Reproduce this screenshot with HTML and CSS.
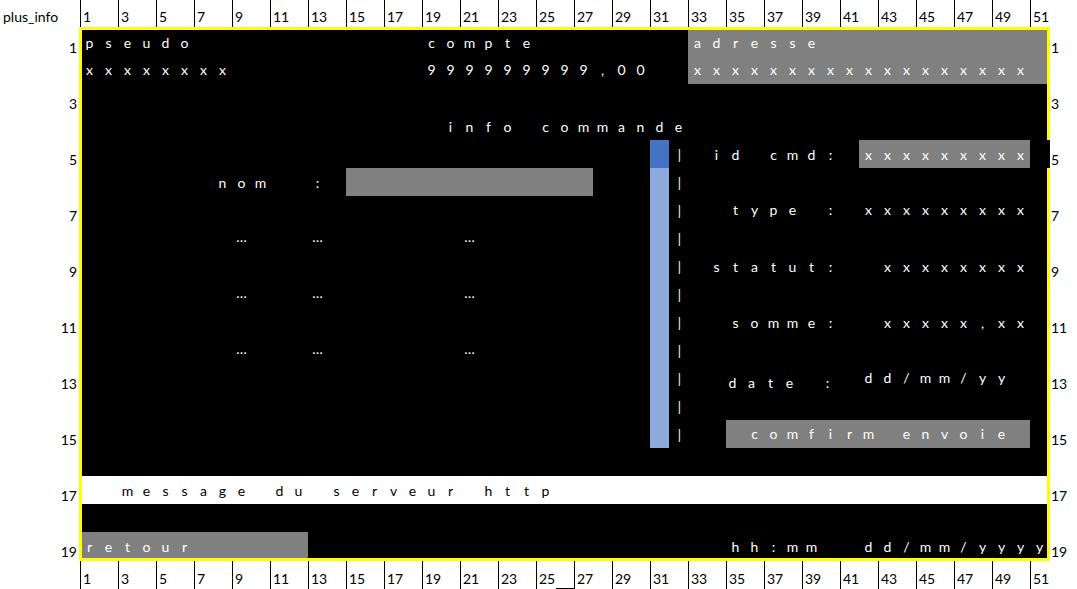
FILE: index.html
```html
<!DOCTYPE html>
<html lang="fr">
<head>
<meta charset="utf-8">
<title>plus_info</title>
<link rel="stylesheet" href="styles.css">
</head>
<body>
<div class="page">
  <div class="colhead top">
    <div class="corner">plus_info</div>
    <div class="ch">1</div><div class="ch">3</div><div class="ch">5</div><div class="ch">7</div><div class="ch">9</div><div class="ch">11</div><div class="ch">13</div><div class="ch">15</div><div class="ch">17</div><div class="ch">19</div><div class="ch">21</div><div class="ch">23</div><div class="ch">25</div><div class="ch">27</div><div class="ch">29</div><div class="ch">31</div><div class="ch">33</div><div class="ch">35</div><div class="ch">37</div><div class="ch">39</div><div class="ch">41</div><div class="ch">43</div><div class="ch">45</div><div class="ch">47</div><div class="ch">49</div><div class="ch">51</div>
  </div>

  <div class="middle">
    <div class="rowhead left">
      <div>1</div><div></div><div>3</div><div></div><div>5</div><div></div><div>7</div><div></div><div>9</div><div></div><div>11</div><div></div><div>13</div><div></div><div>15</div><div></div><div>17</div><div></div><div>19</div>
    </div>

    <div class="sheet">
      <div class="box grey b-adresse"></div>
      <div class="box grey b-nom"></div>
      <div class="box grey b-id"></div>
      <div class="box grey b-confirm"></div>
      <div class="box white b-msg"></div>
      <div class="box grey b-retour"></div>
      <div class="box blue-dark b-scroll1"></div>
      <div class="box blue-light b-scroll2"></div>

      <div class="run r-pseudo"><span>p</span><span>s</span><span>e</span><span>u</span><span>d</span><span>o</span></div>
      <div class="run r-x8"><span>x</span><span>x</span><span>x</span><span>x</span><span>x</span><span>x</span><span>x</span><span>x</span></div>
      <div class="run r-compte"><span>c</span><span>o</span><span>m</span><span>p</span><span>t</span><span>e</span></div>
      <div class="run r-solde"><span>9</span><span>9</span><span>9</span><span>9</span><span>9</span><span>9</span><span>9</span><span>9</span><span>9</span><span>,</span><span>0</span><span>0</span></div>
      <div class="run r-adresse"><span>a</span><span>d</span><span>r</span><span>e</span><span>s</span><span>s</span><span>e</span></div>
      <div class="run r-x18"><span>x</span><span>x</span><span>x</span><span>x</span><span>x</span><span>x</span><span>x</span><span>x</span><span>x</span><span>x</span><span>x</span><span>x</span><span>x</span><span>x</span><span>x</span><span>x</span><span>x</span><span>x</span></div>

      <div class="run r-info"><span>i</span><span>n</span><span>f</span><span>o</span><span></span><span>c</span><span>o</span><span>m</span><span>m</span><span>a</span><span>n</span><span>d</span><span>e</span></div>

      <div class="run r-nom"><span>n</span><span>o</span><span>m</span><span></span><span></span><span>:</span></div>
      <div class="run dots r-dots8"><span>…</span><span></span><span></span><span></span><span>…</span><span></span><span></span><span></span><span></span><span></span><span></span><span></span><span>…</span></div>
      <div class="run dots r-dots10"><span>…</span><span></span><span></span><span></span><span>…</span><span></span><span></span><span></span><span></span><span></span><span></span><span></span><span>…</span></div>
      <div class="run dots r-dots12"><span>…</span><span></span><span></span><span></span><span>…</span><span></span><span></span><span></span><span></span><span></span><span></span><span></span><span>…</span></div>

      <div class="pipes"><span>|</span><span>|</span><span>|</span><span>|</span><span>|</span><span>|</span><span>|</span><span>|</span><span>|</span><span>|</span><span>|</span></div>

      <div class="run r-id"><span>i</span><span>d</span><span></span><span>c</span><span>m</span><span>d</span><span>:</span></div>
      <div class="run r-idval"><span>x</span><span>x</span><span>x</span><span>x</span><span>x</span><span>x</span><span>x</span><span>x</span><span>x</span></div>
      <div class="run r-type"><span>t</span><span>y</span><span>p</span><span>e</span><span></span><span>:</span></div>
      <div class="run r-typeval"><span>x</span><span>x</span><span>x</span><span>x</span><span>x</span><span>x</span><span>x</span><span>x</span><span>x</span></div>
      <div class="run r-statut"><span>s</span><span>t</span><span>a</span><span>t</span><span>u</span><span>t</span><span>:</span></div>
      <div class="run r-statutval"><span>x</span><span>x</span><span>x</span><span>x</span><span>x</span><span>x</span><span>x</span><span>x</span></div>
      <div class="run r-somme"><span>s</span><span>o</span><span>m</span><span>m</span><span>e</span><span>:</span></div>
      <div class="run r-sommeval"><span>x</span><span>x</span><span>x</span><span>x</span><span>x</span><span>,</span><span>x</span><span>x</span></div>
      <div class="run r-date"><span>d</span><span>a</span><span>t</span><span>e</span><span></span><span>:</span></div>
      <div class="run r-dateval"><span>d</span><span>d</span><span>/</span><span>m</span><span>m</span><span>/</span><span>y</span><span>y</span></div>
      <div class="run r-confirm"><span>c</span><span>o</span><span>m</span><span>f</span><span>i</span><span>r</span><span>m</span><span></span><span>e</span><span>n</span><span>v</span><span>o</span><span>i</span><span>e</span></div>

      <div class="run dark r-msg"><span>m</span><span>e</span><span>s</span><span>s</span><span>a</span><span>g</span><span>e</span><span></span><span>d</span><span>u</span><span></span><span>s</span><span>e</span><span>r</span><span>v</span><span>e</span><span>u</span><span>r</span><span></span><span>h</span><span>t</span><span>t</span><span>p</span></div>

      <div class="run r-retour"><span>r</span><span>e</span><span>t</span><span>o</span><span>u</span><span>r</span></div>
      <div class="run r-time"><span>h</span><span>h</span><span>:</span><span>m</span><span>m</span><span></span><span></span><span>d</span><span>d</span><span>/</span><span>m</span><span>m</span><span>/</span><span>y</span><span>y</span><span>y</span><span>y</span></div>

      <div class="notch"></div>
    </div>

    <div class="rowhead right">
      <div>1</div><div></div><div>3</div><div></div><div>5</div><div></div><div>7</div><div></div><div>9</div><div></div><div>11</div><div></div><div>13</div><div></div><div>15</div><div></div><div>17</div><div></div><div>19</div>
    </div>
  </div>

  <div class="colhead bottom">
    <div class="corner"></div>
    <div class="ch">1</div><div class="ch">3</div><div class="ch">5</div><div class="ch">7</div><div class="ch">9</div><div class="ch">11</div><div class="ch">13</div><div class="ch">15</div><div class="ch">17</div><div class="ch">19</div><div class="ch">21</div><div class="ch">23</div><div class="ch ul">25</div><div class="ch">27</div><div class="ch">29</div><div class="ch">31</div><div class="ch">33</div><div class="ch">35</div><div class="ch">37</div><div class="ch">39</div><div class="ch">41</div><div class="ch">43</div><div class="ch">45</div><div class="ch">47</div><div class="ch">49</div><div class="ch">51</div>
  </div>
</div>
</body>
</html>
```

FILE: styles.css
```css
html, body {
  margin: 0;
  padding: 0;
  background: #fff;
}

body {
  font-family: Lato, "Liberation Sans", sans-serif;
  font-size: 14px;
  color: #000;
  width: 1077px;
  height: 589px;
  overflow: hidden;
}

.page {
  display: flex;
  flex-direction: column;
}

/* column headers */
.colhead {
  display: grid;
  grid-template-columns: 80px repeat(26, 38px);
  line-height: 16px;
}

.colhead.top {
  height: 28px;
}

.colhead.bottom {
  height: 29px;
}

.corner {
  padding: 9px 0 0 3px;
}

.ch {
  border-left: 1px solid #000;
  padding-left: 2px;
  box-sizing: border-box;
}

.top .ch {
  padding-top: 9px;
  height: 27px;
}

.bottom .ch {
  padding-top: 10px;
  margin-top: 1px;
  height: 28px;
}

.bottom .ch.ul {
  background: linear-gradient(#000, #000) no-repeat 19px 100% / 19px 1px;
}

/* middle band */
.middle {
  display: grid;
  grid-template-columns: 80px 969px 1fr;
  height: 532px;
}

.rowhead {
  display: grid;
  grid-template-rows: repeat(19, 28px);
  line-height: 16px;
}

.rowhead div {
  padding-top: 12px;
}

.rowhead.left div {
  text-align: right;
  padding-right: 3px;
}

.rowhead.right div {
  padding-left: 2px;
}

/* sheet */
.sheet {
  position: relative;
  display: grid;
  grid-template-columns: repeat(51, 19px);
  grid-template-rows: repeat(19, 28px);
  background: #000;
}

.sheet::after {
  content: "";
  position: absolute;
  inset: -1px;
  border: 3px solid #ffff00;
  pointer-events: none;
  z-index: 1;
}

.notch {
  position: absolute;
  right: -1px;
  top: 112px;
  width: 3px;
  height: 28px;
  background: #000;
  z-index: 2;
}

.box.grey { background: #808080; }
.box.white { background: #fff; }
.box.blue-dark { background: #4472c4; }
.box.blue-light { background: #8ea9db; }

.b-adresse { grid-column: 33 / 52; grid-row: 1 / 3; }
.b-nom { grid-column: 15 / 28; grid-row: 6; }
.b-id { grid-column: 42 / 51; grid-row: 5; }
.b-confirm { grid-column: 35 / 51; grid-row: 15; }
.b-msg { grid-column: 1 / 52; grid-row: 17; }
.b-retour { grid-column: 1 / 13; grid-row: 19; }
.b-scroll1 { grid-column: 31; grid-row: 5; }
.b-scroll2 { grid-column: 31; grid-row: 6 / 16; }

.run {
  display: flex;
  align-self: start;
  color: #fff;
  line-height: 16px;
  padding-top: 7px;
}

.run span {
  flex: 0 0 19px;
  text-align: center;
}

.run.dark { color: #000; }

.run.dots { padding-top: 5px; }

.pipes {
  grid-column: 32;
  grid-row: 5 / span 11;
  display: grid;
  grid-template-rows: repeat(11, 28px);
  color: #fff;
  line-height: 16px;
  font-size: 13px;
}

.pipes span {
  padding: 7px 0 0 2px;
  text-align: center;
}

.r-pseudo { grid-column: 1 / span 6; grid-row: 1; }
.r-x8 { grid-column: 1 / span 8; grid-row: 2; padding-top: 6px; }
.r-compte { grid-column: 19 / span 6; grid-row: 1; }
.r-solde { grid-column: 19 / span 12; grid-row: 2; padding-top: 6px; }
.r-adresse { grid-column: 33 / span 7; grid-row: 1; }
.r-x18 { grid-column: 33 / span 18; grid-row: 2; padding-top: 6px; }
.r-info { grid-column: 20 / span 13; grid-row: 4; }
.r-nom { grid-column: 8 / span 6; grid-row: 6; }
.r-dots8 { grid-column: 9 / span 13; grid-row: 8; }
.r-dots10 { grid-column: 9 / span 13; grid-row: 10; }
.r-dots12 { grid-column: 9 / span 13; grid-row: 12; }
.r-id { grid-column: 34 / span 7; grid-row: 5; }
.r-idval { grid-column: 42 / span 9; grid-row: 5; }
.r-type { grid-column: 35 / span 6; grid-row: 7; padding-top: 6px; }
.r-typeval { grid-column: 42 / span 9; grid-row: 7; padding-top: 6px; }
.r-statut { grid-column: 34 / span 7; grid-row: 9; }
.r-statutval { grid-column: 43 / span 8; grid-row: 9; }
.r-somme { grid-column: 35 / span 6; grid-row: 11; }
.r-sommeval { grid-column: 43 / span 8; grid-row: 11; }
.r-date { grid-column: 35 / span 6; grid-row: 13; padding-top: 11px; margin-left: -3px; }
.r-dateval { grid-column: 42 / span 8; grid-row: 13; padding-top: 6px; }
.r-confirm { grid-column: 36 / span 14; grid-row: 15; padding-top: 6px; }
.r-msg { grid-column: 3 / span 23; grid-row: 17; }
.r-retour { grid-column: 1 / span 6; grid-row: 19; }
.r-time { grid-column: 35 / span 17; grid-row: 19; }
```
